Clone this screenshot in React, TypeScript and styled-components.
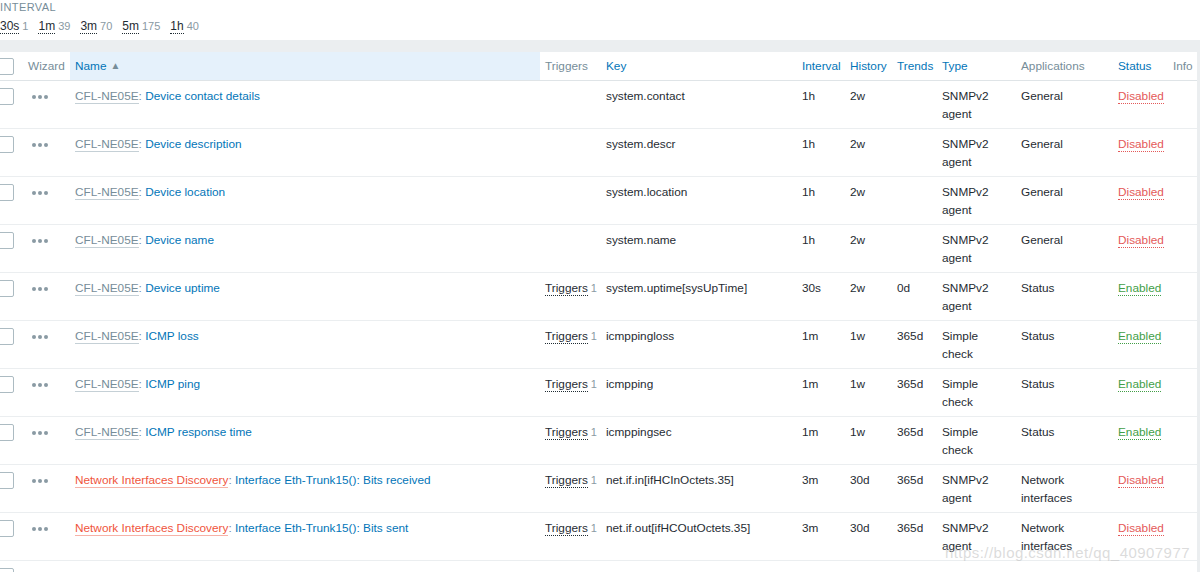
import styled, { createGlobalStyle } from 'styled-components'

const GlobalStyle = createGlobalStyle`
  html, body {
    margin: 0;
    padding: 0;
    background: #ebeef0;
    overflow: hidden;
  }
  body {
    font-family: "Liberation Sans", Arial, sans-serif;
    font-size: 11.8px;
    color: #1f2c33;
  }
`

const Page = styled.div`
  width: 1200px;
  height: 572px;
  position: relative;
  overflow: hidden;
`

const FilterBlock = styled.div`
  background: #ffffff;
  height: 40px;
  box-sizing: border-box;
`

const FilterLabel = styled.div`
  font-size: 11px;
  line-height: 14px;
  letter-spacing: 0.4px;
  color: #768d99;
  text-transform: uppercase;
`

const IntervalList = styled.div`
  display: flex;
  gap: 10px;
  margin-top: 3px;
  line-height: 18px;
  font-size: 12px;
`

const IntervalItem = styled.span`
  white-space: nowrap;
`

const Dotted = styled.span`
  border-bottom: 1px dotted currentColor;
`

const Count = styled.span`
  color: #8a9aa3;
  font-size: 11px;
  margin-left: 3px;
`

const TableBox = styled.div`
  margin-top: 12px;
  width: 1197px;
  background: #ffffff;
  overflow: hidden;
`

const Table = styled.table`
  margin-left: -8px;
  width: 1216px;
  table-layout: fixed;
  border-collapse: collapse;
`

const Th = styled.th<{ $active?: boolean; $link?: boolean }>`
  height: 28px;
  padding: 0 5px;
  text-align: left;
  font-weight: normal;
  white-space: nowrap;
  color: ${({ $link }) => ($link ? '#0275b8' : '#768d99')};
  background: ${({ $active }) => ($active ? '#e5f1fb' : '#ffffff')};
  border-bottom: 1px solid #dfe4e7;
`

const Td = styled.td`
  padding: 6px 5px 5px;
  vertical-align: top;
  line-height: 18px;
  border-bottom: 1px solid #ebeef0;
  height: 36px;
  white-space: nowrap;
`

const WrapTd = styled(Td)`
  white-space: normal;
`

const Checkbox = styled.span`
  display: block;
  width: 15px;
  height: 15px;
  margin-top: 1px;
  border: 1px solid #acbbc2;
  border-radius: 2px;
  background: #ffffff;
`

const Dots = styled.span`
  display: inline-flex;
  gap: 2px;
  margin-left: 4px;
  vertical-align: middle;
`

const Dot = styled.span`
  width: 4px;
  height: 4px;
  border-radius: 50%;
  background: #8a9aa3;
`

const Prefix = styled.span<{ $discovery?: boolean }>`
  color: ${({ $discovery }) => ($discovery ? '#f0543c' : '#768d99')};
  border-bottom: 1px solid ${({ $discovery }) => ($discovery ? '#f7b3a8' : '#c5d0d6')};
`

const Sep = styled.span`
  color: #768d99;
`

const ItemLink = styled.span`
  color: #0275b8;
`

const Sort = styled.span`
  font-size: 10px;
  margin-left: 4px;
  color: #768d99;
  vertical-align: 1px;
`

const Status = styled.span<{ $on: boolean }>`
  color: ${({ $on }) => ($on ? '#429e47' : '#e45959')};
  border-bottom: 1px dotted ${({ $on }) => ($on ? '#429e47' : '#e45959')};
`

const Watermark = styled.div`
  position: absolute;
  right: 10px;
  bottom: 11px;
  font-size: 15px;
  color: rgba(190, 190, 190, 0.55);
  letter-spacing: 0.45px;
  pointer-events: none;
`

type Item = {
  prefix: string
  discovery?: boolean
  name: string
  triggers?: number
  key: string
  interval: string
  history: string
  trends: string
  type: string
  app: string
  enabled: boolean
}

const items: Item[] = [
  { prefix: 'CFL-NE05E', name: 'Device contact details', key: 'system.contact', interval: '1h', history: '2w', trends: '', type: 'SNMPv2 agent', app: 'General', enabled: false },
  { prefix: 'CFL-NE05E', name: 'Device description', key: 'system.descr', interval: '1h', history: '2w', trends: '', type: 'SNMPv2 agent', app: 'General', enabled: false },
  { prefix: 'CFL-NE05E', name: 'Device location', key: 'system.location', interval: '1h', history: '2w', trends: '', type: 'SNMPv2 agent', app: 'General', enabled: false },
  { prefix: 'CFL-NE05E', name: 'Device name', key: 'system.name', interval: '1h', history: '2w', trends: '', type: 'SNMPv2 agent', app: 'General', enabled: false },
  { prefix: 'CFL-NE05E', name: 'Device uptime', triggers: 1, key: 'system.uptime[sysUpTime]', interval: '30s', history: '2w', trends: '0d', type: 'SNMPv2 agent', app: 'Status', enabled: true },
  { prefix: 'CFL-NE05E', name: 'ICMP loss', triggers: 1, key: 'icmppingloss', interval: '1m', history: '1w', trends: '365d', type: 'Simple check', app: 'Status', enabled: true },
  { prefix: 'CFL-NE05E', name: 'ICMP ping', triggers: 1, key: 'icmpping', interval: '1m', history: '1w', trends: '365d', type: 'Simple check', app: 'Status', enabled: true },
  { prefix: 'CFL-NE05E', name: 'ICMP response time', triggers: 1, key: 'icmppingsec', interval: '1m', history: '1w', trends: '365d', type: 'Simple check', app: 'Status', enabled: true },
  { prefix: 'Network Interfaces Discovery', discovery: true, name: 'Interface Eth-Trunk15(): Bits received', triggers: 1, key: 'net.if.in[ifHCInOctets.35]', interval: '3m', history: '30d', trends: '365d', type: 'SNMPv2 agent', app: 'Network interfaces', enabled: false },
  { prefix: 'Network Interfaces Discovery', discovery: true, name: 'Interface Eth-Trunk15(): Bits sent', triggers: 1, key: 'net.if.out[ifHCOutOctets.35]', interval: '3m', history: '30d', trends: '365d', type: 'SNMPv2 agent', app: 'Network interfaces', enabled: false },
]

const intervals = [
  ['30s', '1'],
  ['1m', '39'],
  ['3m', '70'],
  ['5m', '175'],
  ['1h', '40'],
]

const widths = [31, 47, 470, 61, 196, 48, 47, 45, 79, 97, 55, 40]

const App: React.FC = () => {
  return (
    <Page>
      <GlobalStyle />
      <FilterBlock>
        <FilterLabel>Interval</FilterLabel>
        <IntervalList>
          {intervals.map(([label, count]) => (
            <IntervalItem key={label}>
              <Dotted>{label}</Dotted>
              <Count>{count}</Count>
            </IntervalItem>
          ))}
        </IntervalList>
      </FilterBlock>
      <TableBox>
        <Table>
          <colgroup>
            {widths.map((w, i) => (
              <col key={i} style={{ width: w }} />
            ))}
          </colgroup>
          <thead>
            <tr>
              <Th><Checkbox /></Th>
              <Th>Wizard</Th>
              <Th $active $link>Name<Sort>▲</Sort></Th>
              <Th>Triggers</Th>
              <Th $link>Key</Th>
              <Th $link>Interval</Th>
              <Th $link>History</Th>
              <Th $link>Trends</Th>
              <Th $link>Type</Th>
              <Th>Applications</Th>
              <Th $link>Status</Th>
              <Th>Info</Th>
            </tr>
          </thead>
          <tbody>
            {items.map((it) => (
              <tr key={it.key}>
                <Td><Checkbox /></Td>
                <Td>
                  <Dots><Dot /><Dot /><Dot /></Dots>
                </Td>
                <Td>
                  <Prefix $discovery={it.discovery}>{it.prefix}</Prefix>
                  <Sep>: </Sep>
                  <ItemLink>{it.name}</ItemLink>
                </Td>
                <Td>
                  {it.triggers && (
                    <>
                      <Dotted>Triggers</Dotted>
                      <Count>{it.triggers}</Count>
                    </>
                  )}
                </Td>
                <Td>{it.key}</Td>
                <Td>{it.interval}</Td>
                <Td>{it.history}</Td>
                <Td>{it.trends}</Td>
                <WrapTd>{it.type}</WrapTd>
                <WrapTd>{it.app}</WrapTd>
                <Td>
                  <Status $on={it.enabled}>{it.enabled ? 'Enabled' : 'Disabled'}</Status>
                </Td>
                <Td />
              </tr>
            ))}
            <tr>
              <Td><Checkbox /></Td>
              <Td colSpan={11} />
            </tr>
          </tbody>
        </Table>
      </TableBox>
      <Watermark>https://blog.csdn.net/qq_40907977</Watermark>
    </Page>
  )
}

export default App
